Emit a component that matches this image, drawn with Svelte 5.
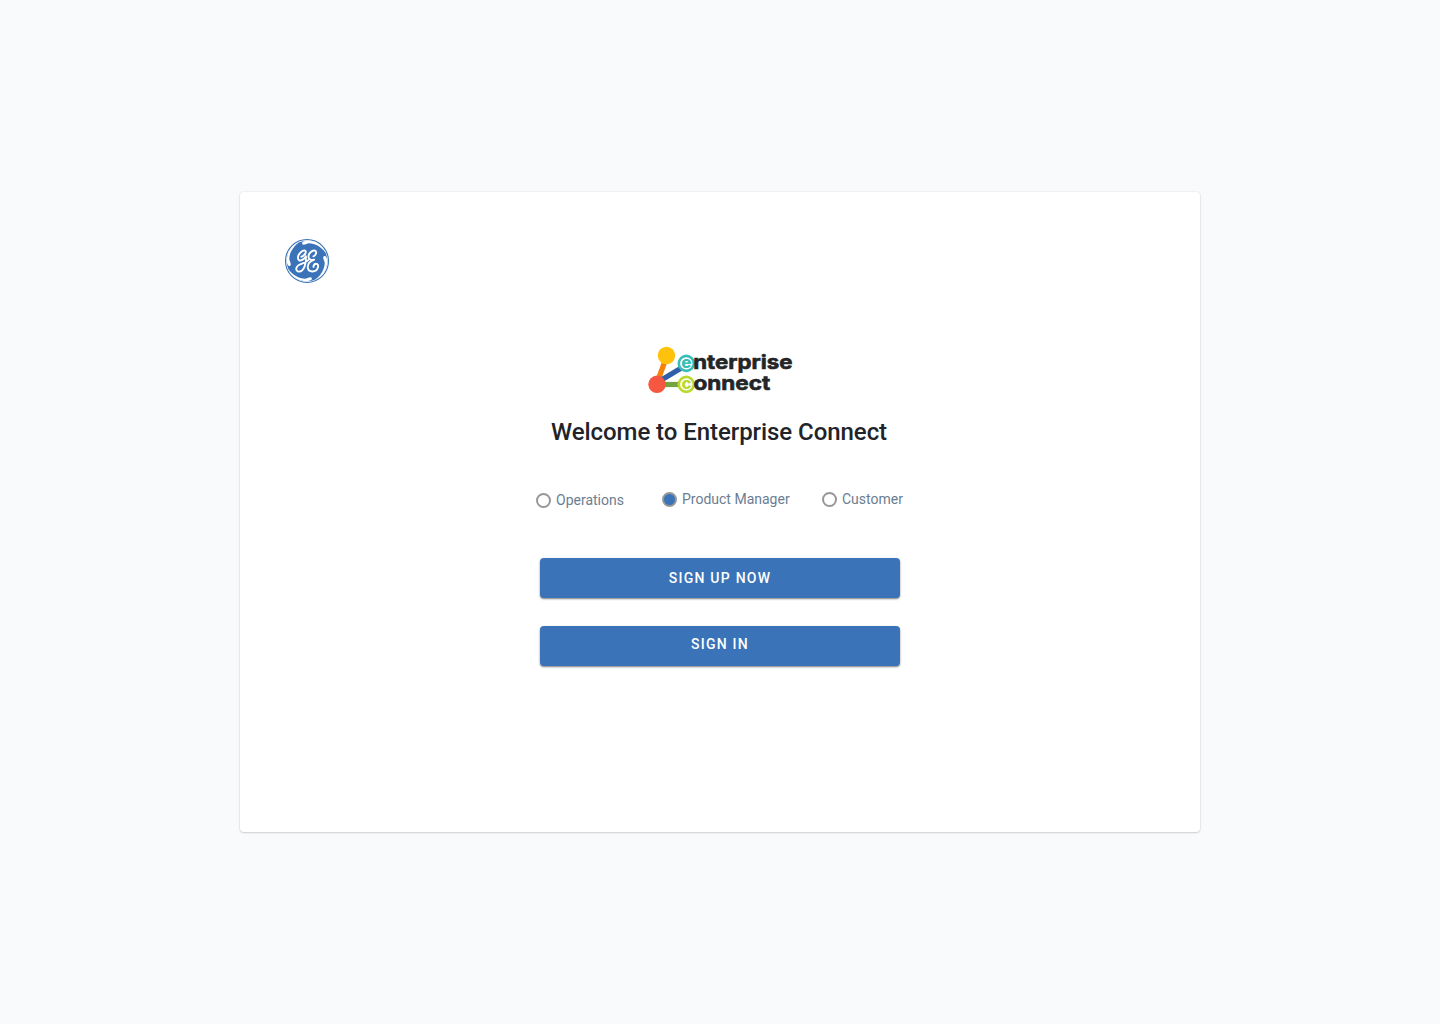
<script>
  const roles = [
    { id: 'operations', label: 'Operations' },
    { id: 'manager', label: 'Product Manager' },
    { id: 'customer', label: 'Customer' }
  ];
  let selected = $state('manager');
</script>

<main>
  <section class="card">
    <svg class="ge" viewBox="0 0 46 46" aria-label="GE">
      <circle cx="23" cy="23" r="21.5" fill="#fff" stroke="#3a73b8" stroke-width="1.1" />
      <circle cx="23" cy="23" r="20.3" fill="#3a73b8" />
      <g fill="#fff">
        {#each [0, 90, 180, 270] as turn}
          <path
            transform="rotate({turn} 23 23)"
            d="M3 24.5C2 16 6.6 7.5 15 4.2C9 8.6 5.3 15 5.3 21C5.3 22.6 6.8 24.4 6.8 26.4C6.7 28 4.9 28.4 3.9 27.2C3.4 26.5 3.1 25.6 3 24.5Z"
          />
        {/each}
      </g>
      <g fill="none" stroke="#fff" stroke-linecap="round" stroke-linejoin="round" stroke-width="1.9">
        <path d="M17.4 18.7C19.4 18.3 22.8 14.9 21.5 13C19.5 10.9 13.5 15.9 14 20.3C14.5 23.7 19 23 21.8 18.4" />
        <path d="M21.8 18.4C22.8 24 20.2 33.7 15 33.6C11 33.2 11.4 28.6 15.8 26.5C18.7 25.1 22.1 24.4 24.2 22.2" />
        <path d="M29.4 18.3C31.9 17.5 33.2 13.4 31 12.6C28.2 11.7 23.9 15.6 24.6 19.5C25 21.8 27.6 22.4 30.2 21.7C26.2 22.5 23.4 26 23.8 29.7C24.4 34.8 32.4 34.8 34 29.2C35.2 24.8 29.8 24.7 29.5 28.9" />
      </g>
    </svg>

    <div class="content">
      <svg class="brand" viewBox="0 0 150 50" aria-label="Enterprise Connect">
        <g stroke-width="5.2">
          <path d="M12 39L21.5 13" stroke="#f58208" />
          <path d="M13 38L38 23" stroke="#315fa7" />
          <path d="M16 40.5H38" stroke="#75a33c" />
        </g>
        <circle cx="21.5" cy="11.5" r="8.7" fill="#ffc20c" />
        <circle cx="12" cy="40.3" r="8.7" fill="#f65741" />
        <circle cx="41.3" cy="19.4" r="7.5" fill="#fff" stroke="#38bdb8" stroke-width="2.6" />
        <circle cx="41.3" cy="40.4" r="7.5" fill="#fff" stroke="#b9d92c" stroke-width="2.6" />
        <text class="initial" x="36.2" y="24" textLength="10.2" lengthAdjust="spacingAndGlyphs" fill="#38bdb8">e</text>
        <text class="initial" x="36.4" y="45" textLength="10" lengthAdjust="spacingAndGlyphs" fill="#b9d92c">c</text>
        <g fill="#242526" stroke="#242526" stroke-width=".6">
          <text x="48.2" y="25.4" textLength="99.2" lengthAdjust="spacingAndGlyphs">nterprise</text>
          <text x="48.4" y="46.4" textLength="76.8" lengthAdjust="spacingAndGlyphs">onnect</text>
        </g>
      </svg>

      <h1>Welcome to Enterprise Connect</h1>

      <div class="roles">
        {#each roles as role}
          <label class={role.id}>
            <input type="radio" name="role" value={role.id} bind:group={selected} />
            <span>{role.label}</span>
          </label>
        {/each}
      </div>

      <button class="signup">SIGN UP NOW</button>
      <button class="signin">SIGN IN</button>
    </div>
  </section>
</main>

<style>
  :global(body) {
    background: #f9fafc;
    font-family: Roboto, sans-serif;
  }
  main {
    min-height: 1024px;
    display: grid;
    place-items: center;
  }
  .card {
    box-sizing: border-box;
    width: 960px;
    height: 640px;
    padding: 46px 44px;
    background: #fff;
    border-radius: 4px;
    box-shadow: 0 0 2px rgba(0, 0, 0, 0.14), 0 1px 2px rgba(0, 0, 0, 0.14);
  }
  .ge {
    display: block;
    width: 46px;
    height: 46px;
  }
  .content {
    display: flex;
    flex-direction: column;
    align-items: center;
    padding-top: 60px;
  }
  .brand {
    display: block;
    width: 150px;
    height: 50px;
  }
  .brand text {
    font-family: Inter, sans-serif;
    font-weight: 700;
    font-size: 19.5px;
  }
  .brand .initial {
    font-weight: 800;
    font-size: 16px;
  }
  h1 {
    margin: 22px 2px 0 0;
    font-size: 24px;
    font-weight: 500;
    line-height: 32px;
    letter-spacing: -0.06px;
    color: #212329;
    white-space: nowrap;
  }
  .roles {
    display: flex;
    align-items: flex-start;
    width: 368px;
    margin-top: 41px;
  }
  label {
    display: flex;
    align-items: center;
    height: 20px;
    gap: 5px;
    font-size: 14px;
    color: #6b7d91;
    white-space: nowrap;
  }
  .operations {
    width: 126px;
    margin-top: 1px;
  }
  .manager {
    width: 160px;
  }
  input {
    appearance: none;
    box-sizing: border-box;
    flex: none;
    width: 15px;
    height: 15px;
    margin: 0;
    border: 2px solid #979797;
    border-radius: 50%;
    background: #fff;
  }
  input:checked {
    background: #3a73b8;
  }
  button {
    width: 360px;
    height: 40px;
    padding: 0;
    border: 0;
    border-radius: 4px;
    background: #3a73b8;
    color: #fff;
    font: 500 14px/20px Roboto, sans-serif;
    letter-spacing: 1.25px;
    box-shadow: 0 1px 2px rgba(0, 0, 0, 0.5);
  }
  .signup {
    margin-top: 48px;
  }
  .signin {
    margin-top: 28px;
    padding-bottom: 4px;
  }
</style>
